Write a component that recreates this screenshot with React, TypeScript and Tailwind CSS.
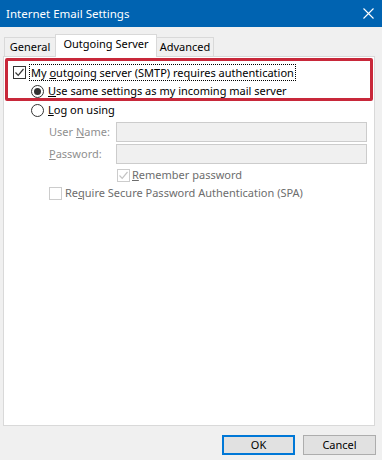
import React from "react";

function CheckBox({ checked = false, disabled = false }: { checked?: boolean; disabled?: boolean }) {
  const c = disabled ? "#c4c4c4" : "#333333";
  return (
    <span
      className={`inline-flex w-[13px] h-[13px] shrink-0 items-center justify-center border bg-white ${disabled ? "border-[#cccccc]" : "border-[#333333]"}`}
    >
      {checked && (
        <svg width="11" height="11" viewBox="0 0 11 11">
          <path d="M1.5 5.5 L4.2 8.3 L9.5 2" fill="none" stroke={c} strokeWidth="1.2" />
        </svg>
      )}
    </span>
  );
}

function Radio({ checked = false }: { checked?: boolean }) {
  return (
    <span className="inline-flex w-[13px] h-[13px] shrink-0 items-center justify-center rounded-full border border-[#333333] bg-white">
      {checked && <span className="w-[7px] h-[7px] rounded-full bg-[#333333]" />}
    </span>
  );
}

function Tab({ label, width, active = false }: { label: string; width: string; active?: boolean }) {
  return (
    <div
      className={`flex items-center justify-center border border-b-0 border-[#d9d9d9] ${width} ${
        active ? "h-[23px] bg-white pb-[3px] relative z-10 -mb-px -mx-px" : "h-[19px] bg-[#f0f0f0]"
      }`}
    >
      {label}
    </div>
  );
}

export default function App() {
  return (
    <div
      className="w-[382px] h-[460px] bg-[#f0f0f0] flex flex-col text-[11px] text-black overflow-hidden"
      style={{ fontFamily: '"Noto Sans", "Open Sans", sans-serif' }}
    >
      <div className="h-[27px] bg-[#0063b1] flex items-center justify-between pl-[6px] pr-[8px] text-white text-[11.5px] shrink-0">
        <span>Internet Email Settings</span>
        <svg width="11" height="11" viewBox="0 0 11 11">
          <path d="M0.5 0.5 L10.5 10.5 M10.5 0.5 L0.5 10.5" stroke="white" strokeWidth="1.1" />
        </svg>
      </div>

      <div className="flex items-end pl-[4px] mt-[7px] h-[22px]">
        <Tab label="General" width="w-[52px]" />
        <Tab label="Outgoing Server" width="w-[102px]" active />
        <Tab label="Advanced" width="w-[58px]" />
      </div>

      <div className="relative mx-[3px] w-[372px] h-[370px] bg-white border border-[#d9d9d9] pt-[6px] pl-[9px]">
        <div className="h-[19px] flex items-center gap-[3px]">
          <CheckBox checked />
          <span className="border border-dotted border-black leading-[15px] px-[1px]">
            My <u>o</u>utgoing server (SMTP) requires authentication
          </span>
        </div>
        <div className="h-[19px] flex items-center gap-[4px] pl-[18px]">
          <Radio checked />
          <span>
            <u>U</u>se same settings as my incoming mail server
          </span>
        </div>
        <div className="h-[19px] flex items-center gap-[4px] pl-[18px]">
          <Radio />
          <span>
            <u>L</u>og on using
          </span>
        </div>

        <div className="pl-[36px] text-[#8f8f8f]">
          <div className="flex items-center mt-[2px] h-[20px]">
            <span className="w-[67px]">
              User <u>N</u>ame:
            </span>
            <div className="w-[251px] h-[20px] bg-[#f0f0f0] border border-[#cccccc]" />
          </div>
          <div className="flex items-center mt-[2px] h-[20px]">
            <span className="w-[67px]">
              <u>P</u>assword:
            </span>
            <div className="w-[251px] h-[20px] bg-[#f0f0f0] border border-[#cccccc]" />
          </div>
          <div className="flex items-center gap-[2px] mt-[2px] h-[18px] pl-[68px] text-[#6d6d6d]">
            <CheckBox checked disabled />
            <span>
              <u>R</u>emember password
            </span>
          </div>
          <div className="flex items-center gap-[3px] h-[19px] text-[#6d6d6d]">
            <CheckBox disabled />
            <span>
              Re<u>q</u>uire Secure Password Authentication (SPA)
            </span>
          </div>
        </div>

        <div className="absolute left-[1px] top-[1px] w-[368px] h-[43px] border-[3px] border-[#c8283a] rounded-[2px]" />
      </div>

      <div className="flex justify-end gap-[8px] pr-[6px] mt-[9px]">
        <button className="w-[73px] h-[20px] bg-[#e1e1e1] border-2 border-[#0078d7] flex items-center justify-center">
          OK
        </button>
        <button className="w-[73px] h-[20px] bg-[#e1e1e1] border border-[#adadad] flex items-center justify-center">
          Cancel
        </button>
      </div>
    </div>
  );
}
